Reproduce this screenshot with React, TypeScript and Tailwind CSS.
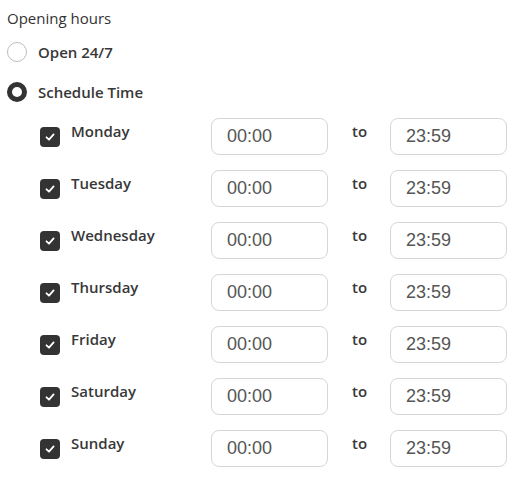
import React from 'react';

const days = ['Monday', 'Tuesday', 'Wednesday', 'Thursday', 'Friday', 'Saturday', 'Sunday'];

const CheckIcon = () => (
  <svg width="12" height="12" viewBox="0 0 12 12" fill="none">
    <path d="M2.5 6.3 L5 8.7 L9.6 3.4" stroke="white" strokeWidth="1.8" strokeLinecap="round" strokeLinejoin="round" />
  </svg>
);

const TimeInput: React.FC<{ value: string }> = ({ value }) => (
  <div className="w-[117px] h-[37px] rounded-[8px] border border-[#d6d6d6] bg-white flex items-center pl-[15px] font-['Liberation_Sans',Arial,sans-serif] text-[18px] text-[#555]">
    {value}
  </div>
);

export default function App() {
  return (
    <div className="min-h-[486px] bg-white pl-[7px] pt-[8px] text-[#383838] font-['Open_Sans','Noto_Sans',sans-serif]">
      <div className="text-[15px] leading-[20px] font-medium text-[#333]">Opening hours</div>

      {/* radio options */}
      <div className="mt-[14px] flex items-center gap-[11px] h-[20px]">
        <span className="w-[20px] h-[20px] rounded-full border border-[#bdbdbd] bg-white" />
        <span className="text-[15px] font-semibold">Open 24/7</span>
      </div>
      <div className="mt-[20px] flex items-center gap-[11px] h-[20px]">
        <span className="w-[20px] h-[20px] rounded-full border-[5px] border-[#333] bg-white" />
        <span className="text-[15px] font-semibold">Schedule Time</span>
      </div>

      {/* days */}
      <div className="mt-[16px] ml-[33px] flex flex-col gap-[15px]">
        {days.map((d) => (
          <div key={d} className="flex items-start h-[37px]">
            <span className="mt-[9px] w-[20px] h-[20px] rounded-[4px] bg-[#333] flex items-center justify-center shrink-0">
              <CheckIcon />
            </span>
            <span className="ml-[11px] mt-[2px] w-[140px] text-[15px] font-semibold leading-[22px]">{d}</span>
            <TimeInput value="00:00" />
            <span className="ml-[24px] mt-[2px] w-[38px] text-[15px] font-semibold leading-[22px]">to</span>
            <TimeInput value="23:59" />
          </div>
        ))}
      </div>
    </div>
  );
}
